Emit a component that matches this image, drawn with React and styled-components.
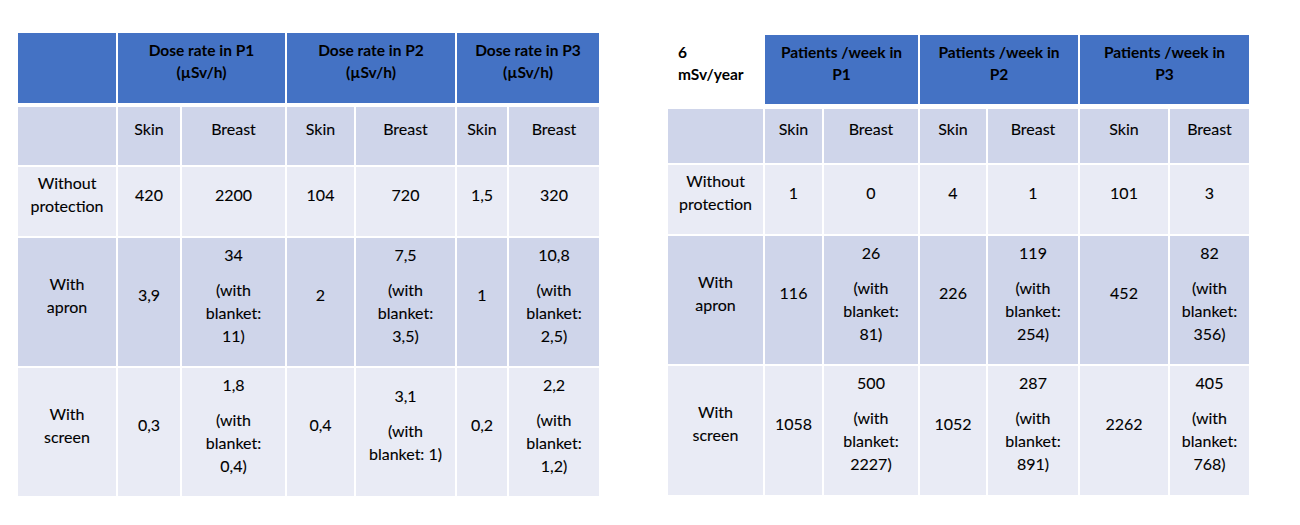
import React from "react";
import styled, { createGlobalStyle } from "styled-components";

const GlobalStyle = createGlobalStyle`
  body {
    margin: 0;
    background: #ffffff;
    font-family: Lato, "Open Sans", "Liberation Sans", sans-serif;
    color: #000;
  }
`;

const Page = styled.div`
  display: flex;
  align-items: flex-start;
  gap: 69px;
  padding-left: 18px;
  padding-top: ${(p) => p.$top}px;
`;

const Table = styled.div`
  display: flex;
  flex-direction: column;
  gap: ${(p) => p.$headGap}px;
  margin-top: ${(p) => p.$offset || 0}px;
`;

const Grid = styled.div`
  display: grid;
  grid-template-columns: ${(p) => p.$cols};
  grid-template-rows: ${(p) => p.$rows};
  gap: 2px;
`;

const HeadCell = styled.div`
  grid-column: ${(p) => p.$span || "auto"};
  background: ${(p) => (p.$plain ? "#ffffff" : "#4472c4")};
  display: flex;
  flex-direction: column;
  justify-content: center;
  align-items: ${(p) => (p.$plain ? "flex-start" : "center")};
  padding: 0 0 14px ${(p) => (p.$plain ? "10px" : "0")};
  font-size: 15.5px;
  font-weight: 700;
  line-height: 22px;
  white-space: nowrap;
  text-align: ${(p) => (p.$plain ? "left" : "center")};
`;

const Cell = styled.div`
  background: ${(p) => (p.$band ? "#e9ebf5" : "#cfd5ea")};
  display: flex;
  flex-direction: column;
  justify-content: center;
  align-items: center;
  padding-bottom: 15px;
  font-size: 16px;
  line-height: 23px;
  white-space: nowrap;
  text-align: center;
  color: #000;
  -webkit-text-stroke: 0.1px #000;
`;

const Para = styled.div`
  & + & {
    margin-top: 12px;
  }
`;

const Lines = ({ lines }) =>
  lines.map((l, i) => <div key={i}>{l}</div>);

// a cell value is a string, or a list of paragraphs, each a list of lines
const CellContent = ({ value }) => {
  if (typeof value === "string") return value;
  return value.map((para, i) => (
    <Para key={i}>
      <Lines lines={para} />
    </Para>
  ));
};

const wb = (main, last, oneLine) =>
  oneLine
    ? [[main], ["(with", "blanket: " + last]]
    : [[main], ["(with", "blanket:", last + ")"]];

const doseTable = {
  cols: "98px 62px 103px 67px 99px 50px 90px",
  headRows: "70px",
  bodyRows: "58px 69px 128px 128px",
  headGap: 4,
  corner: null,
  heads: [
    ["Dose rate in P1", "(µSv/h)"],
    ["Dose rate in P2", "(µSv/h)"],
    ["Dose rate in P3", "(µSv/h)"],
  ],
  rows: [
    ["", "Skin", "Breast", "Skin", "Breast", "Skin", "Breast"],
    [[["Without", "protection"]], "420", "2200", "104", "720", "1,5", "320"],
    [
      [["With", "apron"]],
      "3,9",
      wb("34", "11"),
      "2",
      wb("7,5", "3,5"),
      "1",
      wb("10,8", "2,5"),
    ],
    [
      [["With", "screen"]],
      "0,3",
      wb("1,8", "0,4"),
      "0,4",
      wb("3,1", "1)", true),
      "0,2",
      wb("2,2", "1,2"),
    ],
  ],
};

const patientTable = {
  cols: "95px 57px 94px 66px 90px 88px 79px",
  headRows: "69px",
  bodyRows: "54px 69px 128px 129px",
  headGap: 5,
  corner: ["6", "mSv/year"],
  heads: [
    ["Patients /week in", "P1"],
    ["Patients /week in", "P2"],
    ["Patients /week in", "P3"],
  ],
  rows: [
    ["", "Skin", "Breast", "Skin", "Breast", "Skin", "Breast"],
    [[["Without", "protection"]], "1", "0", "4", "1", "101", "3"],
    [
      [["With", "apron"]],
      "116",
      wb("26", "81"),
      "226",
      wb("119", "254"),
      "452",
      wb("82", "356"),
    ],
    [
      [["With", "screen"]],
      "1058",
      wb("500", "2227"),
      "1052",
      wb("287", "891"),
      "2262",
      wb("405", "768"),
    ],
  ],
};

const DataTable = ({ data, offset }) => (
  <Table $headGap={data.headGap} $offset={offset}>
    <Grid $cols={data.cols} $rows={data.headRows}>
      {data.corner ? (
        <HeadCell $plain>
          <Lines lines={data.corner} />
        </HeadCell>
      ) : (
        <HeadCell />
      )}
      {data.heads.map((h, i) => (
        <HeadCell key={i} $span="span 2">
          <Lines lines={h} />
        </HeadCell>
      ))}
    </Grid>
    <Grid $cols={data.cols} $rows={data.bodyRows}>
      {data.rows.map((row, r) =>
        row.map((value, c) => (
          <Cell key={r + "-" + c} $band={r % 2 === 1}>
            <CellContent value={value} />
          </Cell>
        ))
      )}
    </Grid>
  </Table>
);

export default function App() {
  return (
    <>
      <GlobalStyle />
      <Page $top={33}>
        <DataTable data={doseTable} />
        <DataTable data={patientTable} offset={2} />
      </Page>
    </>
  );
}
